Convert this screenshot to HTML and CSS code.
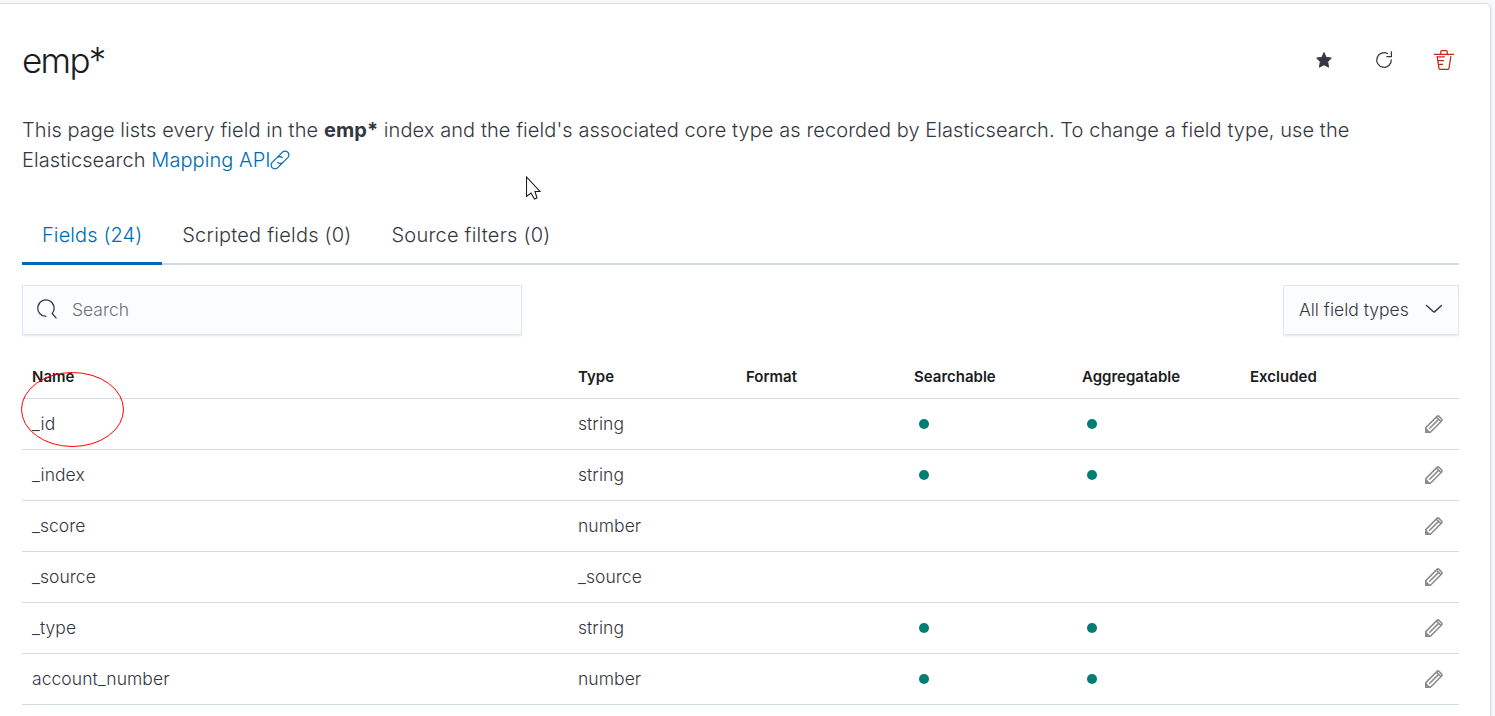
FILE: index.html
```html
<!DOCTYPE html>
<html lang="en">
<head>
<meta charset="utf-8">
<title>emp* index pattern</title>
<link rel="stylesheet" href="styles.css">
</head>
<body>
<svg class="sprite" aria-hidden="true">
  <symbol id="pencil" viewBox="0 0 18 18"><path d="M.8 17.2V12.6L12 1.4Q13 .4 14 1.4L16.6 4Q17.6 5 16.6 6L5.4 17.2ZM4.2 13.8L13.6 4.4M11.6 2.2L15.8 6.4" fill="none" stroke="currentColor" stroke-width="1.5"/><path d="M.8 17.2V12.6L5.4 17.2Z" fill="currentColor"/></symbol>
</svg>
<main class="panel">
  <header class="header">
    <h1 class="title">emp*</h1>
    <div class="actions">
      <svg class="icon" viewBox="0 0 20 20"><path d="M10 2.5l2.2 4.9 5.2.6-3.7 3.7.9 5.5L10 14.8l-4.6 2.4.9-5.5L2.6 8l5.2-.6z" fill="#343741" stroke="#343741" stroke-width=".9" stroke-linejoin="round"/></svg>
      <svg class="icon" viewBox="0 0 20 20"><path d="M13.9 3.8A7.3 7.3 0 1 0 17.3 9.4M17.4 1.2V6.6H12.4" fill="none" stroke="#343741" stroke-width="1.25"/></svg>
      <svg class="icon" viewBox="0 0 20 20"><path d="M0 4.4H20M6.8 4V1.6Q6.8.7 7.7.7H12.3Q13.2.7 13.2 1.6V4M3.1 6.2L5 18.4Q5.2 19.4 6.1 19.4H14Q14.8 19.4 15 18.4L16.9 6.2M3.8 6.9H10.8M4.4 10.6H10M5 14.4H9" fill="none" stroke="#bd271e" stroke-width="1.25"/></svg>
    </div>
  </header>
  <p class="intro">This page lists every field in the <strong>emp*</strong> index and the field's associated core type as recorded by Elasticsearch. To change a field type, use the<br>Elasticsearch <a class="link">Mapping API<svg class="link-icon" viewBox="0 0 20 20"><g fill="none" stroke="currentColor" stroke-width="1.2" stroke-linecap="round"><path d="M7.6 7.2L12.4 2.2Q15 .2 17.8 2.2Q20 4.9 17.8 7.6L13 12.4Q10.4 14.4 7.8 12.4"/><path d="M12.4 12.8L7.6 17.8Q5 19.8 2.2 17.8Q0 15.1 2.2 12.4L7 7.6Q9.6 5.6 12.2 7.6"/></g></svg></a></p>
  <nav class="tabs">
    <a class="tab tab-active">Fields (24)</a>
    <a class="tab">Scripted fields (0)</a>
    <a class="tab">Source filters (0)</a>
  </nav>
  <div class="filters">
    <div class="control search">
      <svg class="icon" viewBox="0 0 20 20"><path d="M9.4 17.3A8.2 8.2 0 1 1 15.2 14.4L19.4 19.4" fill="none" stroke="#343741" stroke-width="1.25"/></svg>
      <span>Search</span>
    </div>
    <div class="control select">
      <span>All field types</span>
      <svg class="chevron" viewBox="0 0 18 10"><path d="M1.5 1.5L8.2 7.6Q9 8.3 9.8 7.6L16.5 1.5" fill="none" stroke="#343741" stroke-width="1.4" stroke-linecap="round"/></svg>
    </div>
  </div>
  <section class="table">
    <div class="row head"><span>Name</span><span>Type</span><span>Format</span><span>Searchable</span><span>Aggregatable</span><span>Excluded</span><span></span></div>
    <div class="row"><span>_id</span><span>string</span><span></span><i class="dot"></i><i class="dot"></i><span></span><svg class="pencil"><use href="#pencil"/></svg></div>
    <div class="row"><span>_index</span><span>string</span><span></span><i class="dot"></i><i class="dot"></i><span></span><svg class="pencil"><use href="#pencil"/></svg></div>
    <div class="row"><span>_score</span><span>number</span><span></span><span></span><span></span><span></span><svg class="pencil"><use href="#pencil"/></svg></div>
    <div class="row"><span>_source</span><span>_source</span><span></span><span></span><span></span><span></span><svg class="pencil"><use href="#pencil"/></svg></div>
    <div class="row"><span>_type</span><span>string</span><span></span><i class="dot"></i><i class="dot"></i><span></span><svg class="pencil"><use href="#pencil"/></svg></div>
    <div class="row"><span>account_number</span><span>number</span><span></span><i class="dot"></i><i class="dot"></i><span></span><svg class="pencil"><use href="#pencil"/></svg></div>
  </section>
</main>
<svg class="annotation" viewBox="0 0 104 76"><ellipse cx="51.5" cy="37.5" rx="51" ry="37" fill="none" stroke="#f00"/></svg>
<svg class="cursor" viewBox="0 0 16 25"><path d="M.5 1V20.5L5 17L8.5 23L11 22L9 15.5H14Z" fill="#fff" stroke="#1c1b2b" stroke-width="1.1"/></svg>
</body>
</html>
```
FILE: styles.css
```css
* { box-sizing: border-box; }
body {
  margin: 0;
  height: 716px;
  overflow: hidden;
  position: relative;
  padding-top: 3px;
  background: #f8f9fd;
  color: #343741;
  font: 350 17.5px/25px Inter, "Liberation Sans", sans-serif;
}
.sprite { display: none; }
.panel {
  width: 1496px;
  height: 740px;
  margin-left: -5px;
  padding: 31px 31px 0 26px;
  background: #fff;
  border: 1px solid #d3dae6;
  border-radius: 5px;
  box-shadow: 0 2px 4px rgba(152, 162, 179, .2);
}
.header { display: flex; justify-content: space-between; height: 50px; }
.title { margin: 0; color: #1a1c21; font-size: 35px; line-height: 50px; font-weight: 300; letter-spacing: -1.7px; }
.actions { display: flex; gap: 40px; align-items: center; padding-right: 5px; }
.icon { display: block; width: 20px; height: 20px; }
.intro { margin: 30px 0 0; font-size: 20px; line-height: 30px; letter-spacing: .075px; white-space: nowrap; }
.intro strong { font-weight: 700; }
.link { color: #006bb4; }
.link-icon { width: 20px; height: 20px; margin-left: -1px; vertical-align: -3px; }
.tabs { display: flex; height: 60px; margin-top: 30px; box-shadow: inset 0 -2px #d3dae6; }
.tab { padding: 15px 20px 0; font-size: 20px; line-height: 30px; letter-spacing: .22px; white-space: nowrap; }
.tab-active { color: #006bb4; letter-spacing: .1px; border-bottom: 3px solid #006bb4; }
.filters { display: flex; justify-content: space-between; margin-top: 20px; }
.control {
  display: flex;
  align-items: center;
  height: 50px;
  padding-bottom: 2px;
  background: #fbfcfd;
  border: 1px solid #e0e4ee;
  box-shadow: 0 2px 2px -1px rgba(152, 162, 179, .3);
}
.search { width: 500px; padding-left: 14px; gap: 15px; color: #69707d; }
.select { width: 176px; padding: 0 15px 2px; justify-content: space-between; white-space: nowrap; }
.chevron { width: 18px; height: 10px; }
.table { margin-top: 20px; }
.row {
  display: grid;
  grid-template-columns: 546px 168px 168px 168px 168px 175px 1fr;
  align-items: center;
  height: 51px;
  padding-left: 10px;
  border-bottom: 1px solid #d3dae6;
  letter-spacing: .06px;
}
.row span { padding-bottom: 2px; }
.head { height: 44px; color: #1a1c21; font-size: 15px; font-weight: 600; letter-spacing: 0; }
.row.head span { padding-bottom: 0; }
.dot { width: 10px; height: 10px; margin-left: 5px; border-radius: 50%; background: #017d73; }
.pencil { width: 18px; height: 18px; color: #8b8b8b; }
.annotation { position: absolute; left: 21px; top: 372px; width: 104px; height: 76px; }
.cursor { position: absolute; left: 526px; top: 176px; width: 16px; height: 25px; }
```
